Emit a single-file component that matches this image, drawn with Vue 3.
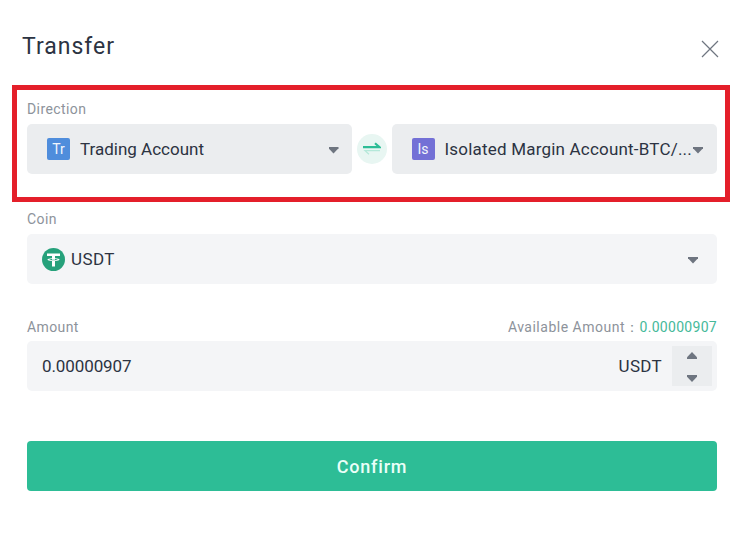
<script setup>
const accounts = [
  { tag: 'Tr', color: '#4f8ddc', name: 'Trading Account' },
  { tag: 'Is', color: '#7370d6', name: 'Isolated Margin Account-BTC/...' }
]
</script>

<template>
  <div class="dialog">
    <div class="header">
      <h1 class="title">Transfer</h1>
      <svg class="close" width="18" height="18" viewBox="0 0 18 18">
        <path d="M1 1L17 17M17 1L1 17" stroke="#6f7680" stroke-width="1.2" fill="none" />
      </svg>
    </div>

    <div class="direction">
      <label class="label">Direction</label>
      <div class="direction-row">
        <template v-for="(acc, i) in accounts" :key="acc.tag">
          <div class="select dark">
            <span class="tag" :style="{ background: acc.color }">{{ acc.tag }}</span>
            <span class="select-text">{{ acc.name }}</span>
            <span class="caret"></span>
          </div>
          <div v-if="i === 0" class="swap">
            <svg width="18" height="14" viewBox="0 0 18 14">
              <path d="M0 5.2H16.5L12 1.2" stroke="#2dbd96" stroke-width="2.2" fill="none" />
              <path d="M17 8.7H2L6 12.2" stroke="#b4e8d9" stroke-width="1.2" fill="none" />
            </svg>
          </div>
        </template>
      </div>
    </div>

    <label class="label coin-label">Coin</label>
    <div class="select light">
      <svg class="coin" width="23" height="23" viewBox="0 0 23 23">
        <circle cx="11.5" cy="11.5" r="11.5" fill="#26a17b" />
        <path d="M5 5.5H18V8H13V10.2C15.6 10.4 17.6 10.9 17.6 11.6C17.6 12.3 15.6 12.8 13 13V18.5H10V13C7.4 12.8 5.4 12.3 5.4 11.6C5.4 10.9 7.4 10.4 10 10.2V8H5Z" fill="#fff" />
        <path d="M6.8 11.6C7.6 12.1 9.6 12.3 11.5 12.3C13.4 12.3 15.4 12.1 16.2 11.6C15.4 11.2 14 11 13 10.9V11.7H10V10.9C9 11 7.6 11.2 6.8 11.6Z" fill="#26a17b" />
      </svg>
      <span class="select-text coin-name">USDT</span>
      <span class="caret"></span>
    </div>

    <div class="amount-head">
      <label class="label">Amount</label>
      <span class="available">Available Amount：<em>0.00000907</em></span>
    </div>
    <div class="select light amount">
      <span class="select-text">0.00000907</span>
      <span class="unit">USDT</span>
      <div class="stepper">
        <span class="caret up"></span>
        <span class="caret"></span>
      </div>
    </div>

    <button class="confirm">Confirm</button>

    <div class="highlight"></div>
  </div>
</template>

<style>
html, body {
  background: #fff;
}
</style>

<style scoped>
.dialog {
  position: relative;
  width: 744px;
  height: 537px;
  box-sizing: border-box;
  padding: 32px 27px 0;
  font-family: Roboto, "Noto Sans", sans-serif;
  color: #2c3342;
  overflow: hidden;
}
.header {
  display: flex;
  justify-content: space-between;
  height: 67px;
}
.title {
  margin: 0 0 0 -5px;
  font-size: 23px;
  line-height: 29px;
  font-weight: 400;
  letter-spacing: 1px;
}
.close {
  margin: 8px -2px 0 0;
}
.label {
  display: block;
  font-size: 14px;
  line-height: 18px;
  color: #8d939b;
  letter-spacing: 0.4px;
}
.direction .label {
  margin-top: 1px;
}
.direction-row {
  display: flex;
  align-items: center;
  margin-top: 6px;
}
.select {
  display: flex;
  align-items: center;
  flex: 1;
  min-width: 0;
  height: 50px;
  box-sizing: border-box;
  padding: 0 13px 0 20px;
  border-radius: 5px;
  font-size: 17px;
}
.select:last-child {
  padding-right: 14px;
}
.select:last-child .select-text {
  letter-spacing: 0.2px;
}
.dark {
  background: #ebedef;
}
.light {
  background: #f4f5f7;
  padding-left: 15px;
  padding-right: 19px;
}
.tag {
  flex: none;
  width: 23px;
  height: 22px;
  margin-right: 10px;
  border-radius: 2px;
  color: #f2f6fc;
  font-size: 14px;
  line-height: 22px;
  text-align: center;
}
.select-text {
  flex: 1;
  min-width: 0;
  white-space: nowrap;
}
.caret {
  flex: none;
  width: 10px;
  height: 7px;
  margin-top: 2px;
  background: #6e7580;
  clip-path: polygon(0 0, 100% 0, 100% 25%, 50% 100%, 0 25%);
}
.caret.up {
  clip-path: polygon(50% 0, 100% 75%, 100% 100%, 0 100%, 0 75%);
}
.swap {
  flex: none;
  display: flex;
  align-items: center;
  justify-content: center;
  width: 30px;
  height: 30px;
  margin: 0 5px;
  border-radius: 50%;
  background: #e8f6f2;
}
.coin-label {
  margin-top: 36px;
  margin-bottom: 6px;
}
.coin {
  flex: none;
  margin-right: 6px;
}
.coin-name {
  letter-spacing: 0.4px;
}
.amount-head {
  display: flex;
  justify-content: space-between;
  align-items: center;
  margin-top: 34px;
  margin-bottom: 5px;
}
.available {
  font-size: 14px;
  line-height: 18px;
  color: #8d939b;
  letter-spacing: 0.5px;
}
.available em {
  font-style: normal;
  color: #46b99a;
  letter-spacing: 0.3px;
}
.amount {
  padding-right: 5px;
}
.amount .select-text {
  letter-spacing: -0.1px;
}
.unit {
  letter-spacing: 0.3px;
}
.stepper {
  flex: none;
  display: flex;
  flex-direction: column;
  justify-content: space-between;
  align-items: center;
  width: 40px;
  height: 40px;
  margin-left: 10px;
  padding: 4px 0;
  box-sizing: border-box;
  background: #ebedef;
}
.confirm {
  display: block;
  width: 100%;
  height: 50px;
  margin-top: 50px;
  border: 0;
  border-radius: 4px;
  background: #2dbd96;
  color: #eafff8;
  font-family: inherit;
  font-size: 18px;
  font-weight: 500;
  letter-spacing: 0.8px;
}
.highlight {
  position: absolute;
  left: 12px;
  top: 85px;
  width: 718px;
  height: 117px;
  box-sizing: border-box;
  border: 5px solid #e41f2a;
  pointer-events: none;
}
</style>
